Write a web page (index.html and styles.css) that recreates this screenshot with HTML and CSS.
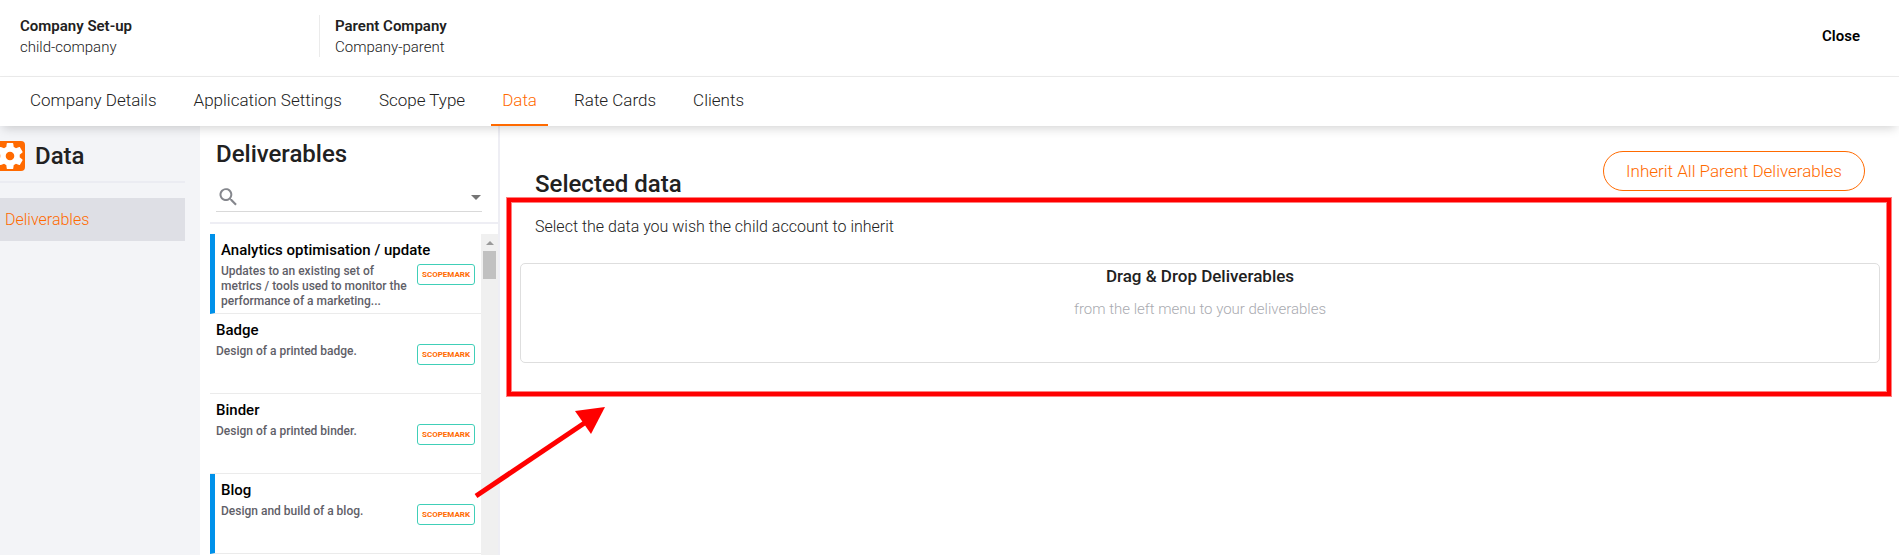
FILE: index.html
```html
<!DOCTYPE html>
<html lang="en">
<head>
<meta charset="utf-8">
<title>Company Set-up</title>
<link rel="stylesheet" href="styles.css">
</head>
<body>
<div class="app">
  <header class="header">
    <div class="company">
      <div class="company-label">Company Set-up</div>
      <div class="company-name">child-company</div>
    </div>
    <div class="company company-parent">
      <div class="company-label">Parent Company</div>
      <div class="company-name">Company-parent</div>
    </div>
    <button class="close" type="button">Close</button>
  </header>
  <nav class="tabs">
    <a class="tab" href="#details">Company Details</a>
    <a class="tab" href="#settings">Application Settings</a>
    <a class="tab" href="#scope">Scope Type</a>
    <a class="tab tab-active" href="#data" aria-current="page">Data</a>
    <a class="tab" href="#rates">Rate Cards</a>
    <a class="tab" href="#clients">Clients</a>
  </nav>
  <div class="body">
    <aside class="sidebar">
      <div class="sidebar-head">
        <svg class="gear" viewBox="0 0 30 30" aria-hidden="true">
          <rect width="30" height="30" rx="4" fill="#ff6a00"/>
          <path transform="translate(-.6 -.6) scale(1.3)" fill="#fff" fill-rule="evenodd" d="M19.43 12.98c.04-.32.07-.64.07-.98s-.03-.66-.07-.98l2.11-1.65c.19-.15.24-.42.12-.64l-2-3.46c-.12-.22-.39-.3-.61-.22l-2.49 1c-.52-.4-1.08-.73-1.69-.98l-.38-2.65C14.46 2.18 14.25 2 14 2h-4c-.25 0-.46.18-.49.42l-.38 2.65c-.61.25-1.17.59-1.69.98l-2.49-1c-.23-.09-.49 0-.61.22l-2 3.46c-.13.22-.07.49.12.64l2.11 1.65c-.04.32-.07.65-.07.98s.03.66.07.98l-2.11 1.65c-.19.15-.24.42-.12.64l2 3.46c.12.22.39.3.61.22l2.49-1c.52.4 1.08.73 1.69.98l.38 2.65c.03.24.24.42.49.42h4c.25 0 .46-.18.49-.42l.38-2.65c.61-.25 1.17-.59 1.69-.98l2.49 1c.23.09.49 0 .61-.22l2-3.46c.12-.22.07-.49-.12-.64l-2.11-1.65zM12 15.3c-1.82 0-3.3-1.48-3.3-3.3s1.48-3.3 3.3-3.3 3.3 1.48 3.3 3.3-1.48 3.3-3.3 3.3z"/>
        </svg>
        <h2 class="title">Data</h2>
      </div>
      <a class="side-link" href="#deliverables">Deliverables</a>
    </aside>
    <section class="panel">
      <h2 class="title panel-title">Deliverables</h2>
      <div class="search">
        <svg class="search-icon" viewBox="0 0 18 18" aria-hidden="true">
          <path fill="#85878d" d="M12.9 11.3h-.8l-.3-.3a6.4 6.4 0 1 0-.8.8l.3.3v.8l5 5 1.5-1.6zm-6 0a4.4 4.4 0 1 1 0-8.9 4.4 4.4 0 0 1 0 8.9z" transform="translate(0 -.3)"/>
        </svg>
        <input class="search-input" type="text" aria-label="Search deliverables">
        <button class="search-toggle" type="button" aria-label="Filter"></button>
      </div>
      <div class="list-wrap">
        <ul class="list">
          <li class="item item-marked">
            <div class="item-text"><h3 class="item-title">Analytics optimisation / update</h3>
            <p class="item-desc">Updates to an existing set of metrics / tools used to monitor the performance of a marketing...</p></div>
            <span class="badge">SCOPEMARK</span>
          </li>
          <li class="item">
            <div class="item-text"><h3 class="item-title">Badge</h3>
            <p class="item-desc">Design of a printed badge.</p></div>
            <span class="badge">SCOPEMARK</span>
          </li>
          <li class="item">
            <div class="item-text"><h3 class="item-title">Binder</h3>
            <p class="item-desc">Design of a printed binder.</p></div>
            <span class="badge">SCOPEMARK</span>
          </li>
          <li class="item item-marked">
            <div class="item-text"><h3 class="item-title">Blog</h3>
            <p class="item-desc">Design and build of a blog.</p></div>
            <span class="badge">SCOPEMARK</span>
          </li>
        </ul>
        <div class="scrollbar" aria-hidden="true">
          <div class="scroll-up"></div>
          <div class="scroll-thumb"></div>
        </div>
      </div>
    </section>
    <main class="main">
      <div class="main-head">
        <h1 class="title">Selected data</h1>
        <button class="inherit" type="button">Inherit All Parent Deliverables</button>
      </div>
      <div class="selection">
        <p class="hint">Select the data you wish the child account to inherit</p>
        <div class="drop">
          <div class="drop-title">Drag &amp; Drop Deliverables</div>
          <div class="drop-text">from the left menu to your deliverables</div>
        </div>
        <div class="callout"></div>
        <svg class="arrow" viewBox="0 0 132 94" aria-hidden="true">
          <path d="M2 91 L112 17" stroke="#f00" stroke-width="5"/>
          <path d="M101 6 L131 2 L117 29z" fill="#f00"/>
        </svg>
      </div>
    </main>
  </div>
</div>
</body>
</html>
```
FILE: styles.css
```css
* { box-sizing: border-box; }
body {
  margin: 0;
  background: #fff;
  color: #212121;
  font-family: Roboto, "Open Sans", sans-serif;
  font-size: 15px;
  font-weight: 300;
}
h1, h2, h3, p, ul { margin: 0; padding: 0; }
a { color: inherit; text-decoration: none; }
button { border: 0; padding: 0; background: none; font: inherit; color: inherit; cursor: pointer; }

.app { display: flex; flex-direction: column; height: 100vh; overflow: hidden; }

.header {
  display: flex;
  align-items: flex-start;
  height: 77px;
  padding: 15px 39px 0 20px;
  border-bottom: 1px solid #ebebeb;
}
.company { width: 299px; padding-top: 1px; line-height: 21px; }
.company-parent { height: 42px; padding-left: 15px; border-left: 1px solid #ebebeb; }
.company-label { font-weight: 600; }
.close { margin-left: auto; color: #000; font-weight: 600; line-height: 42px; }

.tabs {
  position: relative;
  z-index: 1;
  display: flex;
  gap: 15px;
  height: 49px;
  padding-left: 19px;
  background: #fff;
  box-shadow: 0 5px 10px -3px rgba(0, 0, 0, .18);
}
.tab { padding: 0 11px; font-size: 17px; line-height: 47px; border-bottom: 2px solid transparent; }
.tab-active { color: #ff6a00; border-color: #ff6a00; }

.body { display: flex; flex: 1; min-height: 0; }
.title { font-size: 24px; font-weight: 500; line-height: 30px; }

.sidebar { flex: none; width: 200px; padding-right: 15px; background: #f3f4f7; }
.sidebar-head {
  display: flex;
  gap: 10px;
  height: 57px;
  margin-bottom: 15px;
  padding-top: 15px;
  border-bottom: 2px solid #ebecf2;
}
.gear { flex: none; width: 30px; height: 30px; margin-left: -5px; }
.side-link { display: block; padding-left: 5px; background: #dedfe5; color: #ff6a00; font-size: 16px; line-height: 43px; }

.panel {
  display: flex;
  flex-direction: column;
  flex: none;
  width: 300px;
  padding-left: 10px;
  border-right: 2px solid #eeeef4;
}
.panel-title { padding: 13px 0 0 6px; }
.search {
  display: flex;
  align-items: center;
  height: 43px;
  margin: 0 16px 10px 6px;
  padding: 14px 1px 0 3px;
  border-bottom: 1px solid #d9d9d9;
}
.search-icon { width: 18px; height: 18px; }
.search-input { flex: 1; min-width: 0; border: 0; outline: 0; background: none; font: inherit; }
.search-toggle { border: 5px solid transparent; border-top-color: #757575; border-bottom: 0; }
.list-wrap { display: flex; flex: 1; min-height: 0; padding-top: 10px; border-top: 2px solid #eeeef4; }
.list { flex: 1; overflow: hidden; list-style: none; }
.item {
  display: flex;
  justify-content: space-between;
  height: 80px;
  padding: 6px 6px 0 6px;
  border-bottom: 1px solid #ebebeb;
}
.item-marked { border-left: 5px solid #0091ea; }
.item-text { width: 190px; }
.item-title { color: #000; font-size: 15px; font-weight: 500; line-height: 20px; white-space: nowrap; }
.item-desc { margin-top: 4px; color: #5f6068; font-size: 12px; font-weight: 500; line-height: 15px; }
.badge {
  flex: none;
  width: 58px;
  height: 21px;
  margin-top: 24px;
  border: 1px solid #40cfb8;
  border-radius: 3px;
  color: #ff6a00;
  font-size: 8px;
  font-weight: 700;
  line-height: 20px;
  text-align: center;
}
.scrollbar { width: 17px; padding: 7px 2px; background: #f0f0f0; }
.scroll-up { width: 8px; margin: 0 3px 6px; border: 4px solid transparent; border-top: 0; border-bottom-color: #9a9a9a; }
.scroll-thumb { height: 28px; background: #c1c1c1; }

.main { flex: 1; min-width: 0; padding: 25px 19px 0 20px; }
.main-head { display: flex; justify-content: space-between; padding: 0 15px; }
.main-head .title { height: 40px; padding-top: 18px; }
.inherit {
  height: 40px;
  padding: 0 22px;
  border: 1px solid #ff6a00;
  border-radius: 20px;
  color: #ff6a00;
  font-size: 17px;
}
.selection { position: relative; padding-top: 25px; }
.hint { padding-left: 15px; font-size: 16px; line-height: 22px; }
.drop { height: 100px; margin-top: 25px; border: 1px solid #dedede; border-radius: 5px; text-align: center; }
.drop-title { font-size: 17px; font-weight: 500; line-height: 24px; }
.drop-text { margin-top: 10px; color: #a9aab0; line-height: 22px; }
.callout {
  position: absolute;
  top: 7px;
  left: -13px;
  right: -11px;
  height: 198px;
  border: 4px solid #f00;
  box-shadow: 0 0 0 1px rgba(255, 0, 0, .5), inset 0 0 0 1px rgba(255, 0, 0, .5);
}
.arrow { position: absolute; top: 214px; left: -46px; width: 132px; height: 94px; }
```
